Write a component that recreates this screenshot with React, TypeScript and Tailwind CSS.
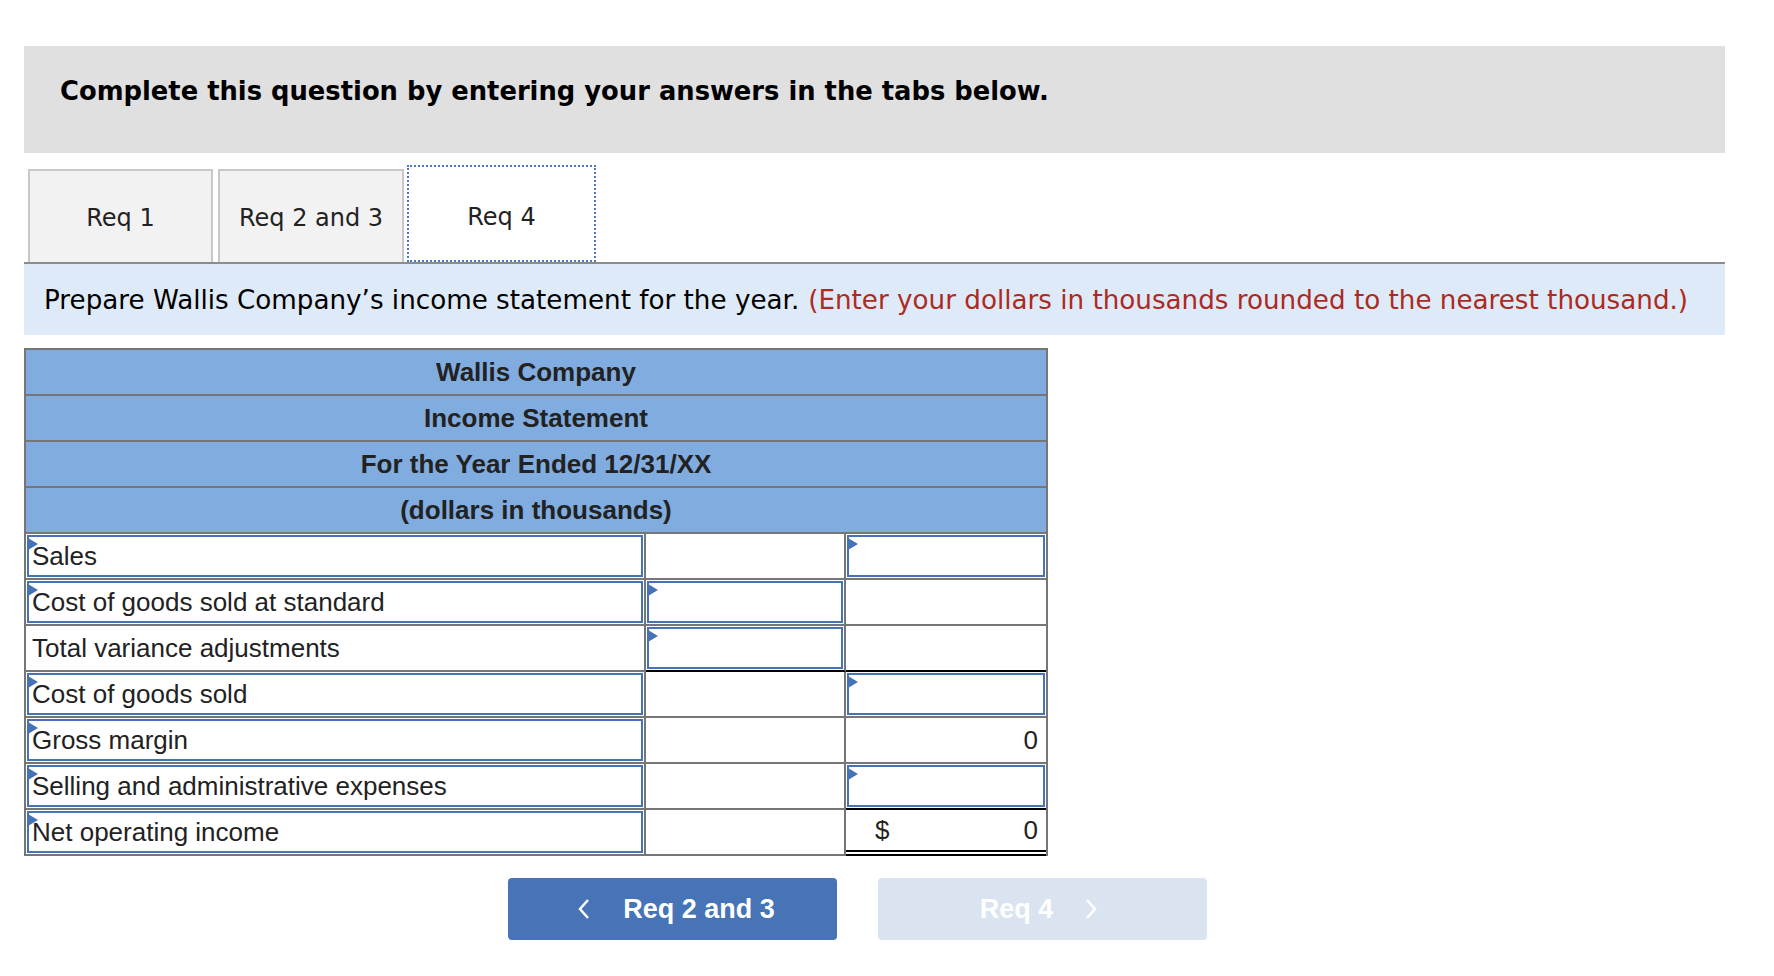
import React from "react";

type Cell = {
  text?: string;
  input?: boolean;
  bottom?: "black" | "double";
  right?: boolean;
  dollar?: boolean;
};

type Row = { label: string; labelInput: boolean; mid: Cell; last: Cell };

const rows: Row[] = [
  { label: "Sales", labelInput: true, mid: {}, last: { input: true } },
  { label: "Cost of goods sold at standard", labelInput: true, mid: { input: true }, last: {} },
  {
    label: "Total variance adjustments",
    labelInput: false,
    mid: { input: true, bottom: "black" },
    last: { bottom: "black" },
  },
  { label: "Cost of goods sold", labelInput: true, mid: {}, last: { input: true } },
  { label: "Gross margin", labelInput: true, mid: {}, last: { text: "0", right: true } },
  {
    label: "Selling and administrative expenses",
    labelInput: true,
    mid: {},
    last: { input: true, bottom: "black" },
  },
  {
    label: "Net operating income",
    labelInput: true,
    mid: {},
    last: { text: "0", right: true, dollar: true, bottom: "double" },
  },
];

const headers = ["Wallis Company", "Income Statement", "For the Year Ended 12/31/XX", "(dollars in thousands)"];

function Marker() {
  return (
    <span className="absolute -left-[1px] top-[1px] w-0 h-0 border-y-[6px] border-y-transparent border-l-[10px] border-l-[#4673b5]" />
  );
}

function InputBox({ children }: { children?: React.ReactNode }) {
  return (
    <div className="relative h-full w-full p-[1px]">
      <div className="relative h-full w-full border-2 border-[#4673b5] flex items-center">
        <Marker />
        {children}
      </div>
    </div>
  );
}

function ValueCell({ cell, last }: { cell: Cell; last?: boolean }) {
  const bottom =
    cell.bottom === "black"
      ? "border-b-2 border-b-black"
      : cell.bottom === "double"
      ? "border-b-[6px] border-double border-b-black"
      : "border-b-2 border-b-[#767676]";
  return (
    <div className={`h-[46px] ${last ? "" : "border-r-2 border-r-[#767676]"} ${bottom}`}>
      {cell.input ? (
        <InputBox />
      ) : (
        <div className="h-full flex items-center px-[8px]">
          {cell.dollar && <span className="ml-[21px]">$</span>}
          {cell.text && <span className="ml-auto">{cell.text}</span>}
        </div>
      )}
    </div>
  );
}

export default function App() {
  return (
    <div className="w-[1774px] min-h-[976px] bg-white pt-[46px] pl-[24px] pr-[49px] text-[#111]">
      {/* instructions banner */}
      <div className="h-[107px] bg-[#e0e0e0] pl-[36px] pt-[30px]">
        <div className="font-['DejaVu_Sans',Verdana,sans-serif] font-bold text-[25.8px] leading-[30px] text-black">
          Complete this question by entering your answers in the tabs below.
        </div>
      </div>

      {/* tabs */}
      <div className="mt-[12px] flex items-end h-[97px] pl-[4px] gap-[5px] font-['DejaVu_Sans',Verdana,sans-serif] text-[24px] text-[#222]">
        <div className="w-[185px] h-[93px] pt-[2px] bg-[#f2f2f2] border-2 border-b-0 border-[#c8c8c8] flex items-center justify-center">
          Req 1
        </div>
        <div className="w-[186px] h-[93px] pt-[2px] bg-[#f2f2f2] border-2 border-b-0 border-[#c8c8c8] flex items-center justify-center">
          Req 2 and 3
        </div>
        <div className="w-[189px] h-[97px] -ml-[2px] pt-[6px] bg-white border-2 border-dotted border-[#4a7bc2] flex items-center justify-center">
          Req 4
        </div>
      </div>
      <div className="h-[2px] bg-[#8c8c8c]" />

      {/* prompt band */}
      <div className="h-[71px] bg-[#deeaf7] pl-[20px] pt-[3px] flex items-center font-['DejaVu_Sans',Verdana,sans-serif] text-[26.2px] text-black">
        <span>Prepare Wallis Company’s income statement for the year.</span>
        <span className="ml-[9px] text-[#ad2a22]">(Enter your dollars in thousands rounded to the nearest thousand.)</span>
      </div>

      {/* statement table */}
      <div className="mt-[13px] w-[1024px] border-2 border-[#767676] border-b-0 font-['Liberation_Sans',Arial,sans-serif] text-[26px] text-[#222]">
        {headers.map((h) => (
          <div
            key={h}
            className="h-[46px] bg-[#80acdf] border-b-2 border-b-[#767676] flex items-center justify-center font-bold"
          >
            {h}
          </div>
        ))}
        {rows.map((r) => (
          <div key={r.label} className="grid grid-cols-[620px_200px_200px]">
            <div className="h-[46px] border-r-2 border-r-[#767676] border-b-2 border-b-[#767676]">
              {r.labelInput ? (
                <InputBox>
                  <span className="pl-[3px]">{r.label}</span>
                </InputBox>
              ) : (
                <div className="h-full flex items-center pl-[6px]">{r.label}</div>
              )}
            </div>
            <ValueCell cell={r.mid} />
            <ValueCell cell={r.last} last />
          </div>
        ))}
      </div>

      {/* navigation */}
      <div className="mt-[22px] ml-[484px] flex gap-[41px] font-['Liberation_Sans',Arial,sans-serif] font-bold text-[27px] text-white">
        <button className="w-[329px] h-[62px] pl-[6px] rounded-[4px] bg-[#4674b6] flex items-center justify-center">
          <svg width="16" height="24" viewBox="0 0 16 24" className="mr-[31px]">
            <path d="M12 3 L4 12 L12 21" fill="none" stroke="white" strokeWidth="2.5" />
          </svg>
          <span>Req 2 and 3</span>
        </button>
        <button className="w-[329px] h-[62px] pr-[6px] rounded-[4px] bg-[#dae4f0] flex items-center justify-center">
          <span>Req 4</span>
          <svg width="16" height="24" viewBox="0 0 16 24" className="ml-[30px]">
            <path d="M4 3 L12 12 L4 21" fill="none" stroke="white" strokeWidth="2.5" />
          </svg>
        </button>
      </div>
    </div>
  );
}
